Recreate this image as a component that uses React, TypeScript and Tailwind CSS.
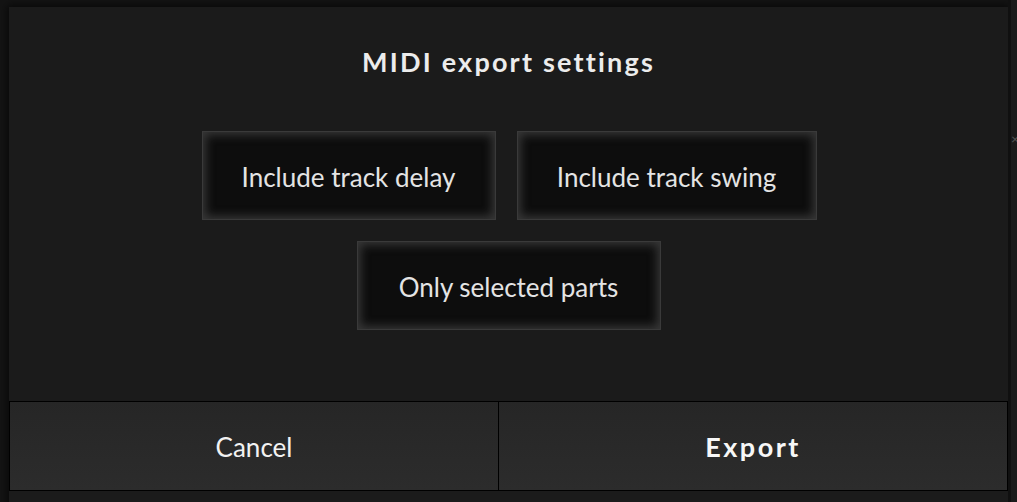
const font = { fontFamily: '"Lato", "Open Sans", sans-serif' };

function OptionButton({ label, width }: { label: string; width: string }) {
  return (
    <button
      className={`${width} h-[89px] flex items-center justify-center pt-[3px] bg-[#0d0d0d] border border-[#3a3a3a] text-[#e4e4e4] text-[26px] shadow-[inset_0_0_10px_3px_rgba(90,90,90,0.55)]`}
    >
      {label}
    </button>
  );
}

export default function App() {
  return (
    <div className="w-[1017px] h-[502px] bg-[#141414] overflow-hidden flex" style={font}>
      <div className="shrink-0 ml-[9px] mt-[7px] w-[999px] h-[520px] bg-[#1b1b1b] flex flex-col shadow-[0_0_8px_2px_rgba(0,0,0,0.6)]">
        {/* Title */}
        <div className="pt-[39px] text-center text-[27px] font-bold tracking-[2.2px] text-[#ececec] leading-[32px]">
          MIDI export settings
        </div>

        {/* Options */}
        <div className="mt-[53px] flex flex-col items-center gap-[21px]">
          <div className="flex gap-[21px] pl-[1px]">
            <OptionButton label="Include track delay" width="w-[294px]" />
            <OptionButton label="Include track swing" width="w-[300px]" />
          </div>
          <OptionButton label="Only selected parts" width="w-[304px]" />
        </div>

        {/* Footer */}
        <div className="mt-[71px] flex h-[90px] border border-black">
          <button className="w-[489px] h-full pt-[2px] bg-gradient-to-b from-[#262626] to-[#2c2c2c] border-r border-black text-[26px] text-[#f2f2f2]">
            Cancel
          </button>
          <button className="flex-1 h-full pt-[2px] bg-gradient-to-b from-[#262626] to-[#2c2c2c] text-[27px] font-bold tracking-[2.5px] text-[#f7f7f7]">
            Export
          </button>
        </div>
      </div>
      <div className="min-w-0 flex-1 flex flex-col border-l-[3px] border-[#101010] bg-[#1a1a1a]">
        <div className="mt-[132px] text-[14px] text-[#555] leading-none">×</div>
      </div>
    </div>
  );
}
